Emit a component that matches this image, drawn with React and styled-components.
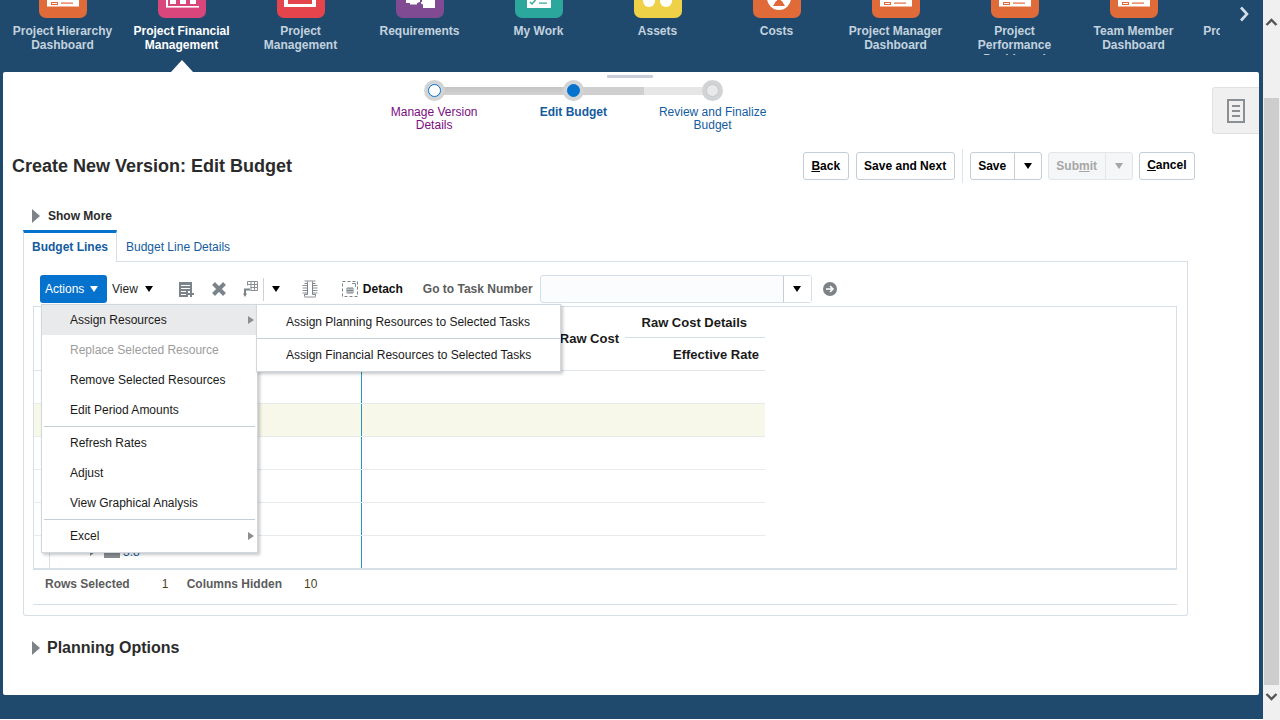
import React from "react";
import styled, { createGlobalStyle } from "styled-components";

const GlobalStyle = createGlobalStyle`
  html, body {
    margin: 0;
    padding: 0;
    height: 720px;
    overflow: hidden;
    background: #fff;
    font-family: "Liberation Sans", Arial, sans-serif;
    font-size: 12px;
  }
`;

const navItems = [
  { label: "Project Hierarchy Dashboard", color: "#e06b39", icon: "card" },
  { label: "Project Financial Management", color: "#d9467c", icon: "bars", active: true },
  { label: "Project Management", color: "#e5444d", icon: "screen" },
  { label: "Requirements", color: "#814b94", icon: "puzzle" },
  { label: "My Work", color: "#2ba79b", icon: "check" },
  { label: "Assets", color: "#eed146", icon: "dots" },
  { label: "Costs", color: "#e06b39", icon: "coin" },
  { label: "Project Manager Dashboard", color: "#e06b39", icon: "card" },
  { label: "Project Performance Dashboard", color: "#e06b39", icon: "card" },
  { label: "Team Member Dashboard", color: "#e06b39", icon: "card" },
  { label: "Project Resource Dashboard", color: "#e06b39", icon: "card" },
];

function TileIcon({ kind, color }) {
  return (
    <svg width="48" height="18" viewBox="0 0 48 18">
      {kind === "card" && (
        <>
          <rect x="8" y="0" width="32" height="6.5" fill="#fff" />
          <rect x="12.5" y="2.5" width="6" height="2" fill="none" stroke={color} />
          <rect x="22" y="2.5" width="12" height="1.2" fill={color} />
        </>
      )}
      {kind === "bars" && (
        <>
          <rect x="8" y="6" width="33" height="1.6" fill="#fff" />
          <rect x="8" y="0" width="2" height="7" fill="#fff" />
          <rect x="12" y="0" width="6" height="4" fill="#fff" />
          <rect x="22" y="0" width="6" height="4" fill="#fff" />
          <rect x="32" y="0" width="6" height="4" fill="#fff" />
        </>
      )}
      {kind === "screen" && (
        <path d="M7 0h32v7H7z M11 0v4h24V0z" fill="#fff" fillRule="evenodd" />
      )}
      {kind === "puzzle" && (
        <path d="M10 0h14v2l-3 1v1.5H14V3h-4z M26 0h13v8H27V4.5l-2-1V2h1z" fill="#fff" />
      )}
      {kind === "check" && (
        <>
          <rect x="12" y="0" width="24" height="8" fill="#fff" />
          <path d="M15 2l2 2 3.5-4" fill="none" stroke={color} strokeWidth="1.4" />
          <rect x="24" y="2.5" width="8" height="1.2" fill={color} />
        </>
      )}
      {kind === "dots" && (
        <>
          <circle cx="15" cy="1" r="6" fill="#fff" />
          <circle cx="32" cy="1" r="6" fill="#fff" />
        </>
      )}
      {kind === "coin" && (
        <>
          <circle cx="26" cy="-2" r="12" fill="#fff" />
          <path d="M20 6l3-5h1V0h4v1h1l3 5z" fill={color} />
        </>
      )}
    </svg>
  );
}

const Page = styled.div`
  display: flex;
  width: 1280px;
  height: 720px;
`;

const Main = styled.div`
  display: flex;
  flex-direction: column;
  width: 1263px;
  height: 719px;
  background: #1f4a6e;
`;

const Nav = styled.nav`
  display: flex;
  height: 72px;
  flex: none;
`;

const NavStrip = styled.div`
  display: flex;
  width: 1220px;
  padding-left: 3px;
  box-sizing: border-box;
  overflow: hidden;
`;

const NavItem = styled.div`
  position: relative;
  flex: none;
  display: flex;
  flex-direction: column;
  align-items: center;
  width: 119px;
  height: 72px;

  ${(p) =>
    p.$active &&
    `
    &::after {
      content: "";
      position: absolute;
      left: 49px;
      bottom: 0;
      border-left: 11px solid transparent;
      border-right: 11px solid transparent;
      border-bottom: 12px solid #fff;
    }
  `}
`;

const Tile = styled.div`
  width: 48px;
  height: 18px;
  flex: none;
  margin-left: 1px;
  border-radius: 0 0 7px 7px;
  background: ${(p) => p.$color};
  line-height: 0;
`;

const NavLabel = styled.div`
  width: 106px;
  height: 31px;
  margin-top: 6px;
  overflow: hidden;
  text-align: center;
  font-weight: bold;
  font-size: 12px;
  line-height: 14px;
  color: ${(p) => (p.$active ? "#fff" : "#c3d2de")};
`;

const NavNext = styled.div`
  display: flex;
  justify-content: center;
  width: 43px;
  box-sizing: border-box;
  padding: 6px 0 0 5px;
  height: 26px;
`;

const Card = styled.main`
  position: relative;
  width: 1256px;
  height: 623px;
  flex: none;
  margin-left: 3px;
  background: #fff;
  border-radius: 2px;
  display: flex;
  flex-direction: column;
`;

const SplitHandle = styled.div`
  position: absolute;
  left: 604px;
  top: 3px;
  width: 46px;
  height: 3px;
  border-radius: 1px;
  background: #c9ced9;
`;

const DrawerTab = styled.div`
  position: absolute;
  right: 0;
  top: 15px;
  width: 46px;
  height: 45px;
  display: flex;
  align-items: center;
  justify-content: center;
  background: #f0f0f0;
  border: 1px solid #dfe2e5;
  border-right: 0;
  border-radius: 3px 0 0 3px;
`;

const Train = styled.div`
  display: flex;
  margin: 8px 0 0 361.5px;
  height: 72px;
  flex: none;
`;

const Step = styled.div`
  position: relative;
  width: 139.25px;
  display: flex;
  flex-direction: column;
  align-items: center;

  ${(p) =>
    p.$track &&
    `
    &::before {
      content: "";
      position: absolute;
      left: 70px;
      top: 7px;
      width: 140px;
      height: 8px;
      background: ${p.$track};
    }
  `}
`;

const StepDot = styled.div`
  position: relative;
  z-index: 1;
  width: 21px;
  height: 21px;
  box-sizing: border-box;
  border-radius: 50%;
  background: #d1d3d4;
  display: flex;
  align-items: center;
  justify-content: center;

  &::after {
    content: "";
    width: 13px;
    height: 13px;
    box-sizing: border-box;
    border-radius: 50%;
    background: ${(p) => (p.$state === "current" ? "#0572ce" : p.$state === "done" ? "#fff" : "#e8e9ea")};
    border: 1px solid ${(p) => (p.$state === "todo" ? "#c3c9cd" : "#0572ce")};
  }
`;

const StepLabel = styled.div`
  width: 112px;
  margin-top: 5px;
  text-align: center;
  font-size: 12px;
  line-height: 13px;
  font-weight: ${(p) => (p.$state === "current" ? "bold" : "normal")};
  color: ${(p) => (p.$state === "done" ? "#7a0d80" : "#145c9e")};
`;

const HeaderRow = styled.div`
  display: flex;
  align-items: center;
  height: 28px;
  flex: none;
  margin-top: 0;
  padding: 0 64px 0 9px;
`;

const Title = styled.h1`
  margin: 0;
  flex: 1;
  font-size: 18px;
  line-height: 28px;
  font-weight: bold;
  color: #2b2b2b;
`;

const Button = styled.button`
  height: 28px;
  box-sizing: border-box;
  padding: 0 ${(p) => p.$pad || 9}px ${(p) => p.$raise || 0}px;
  margin-left: ${(p) => p.$ml || 0}px;
  background: #fff;
  border: 1px solid #c4ced7;
  border-radius: 3px;
  font-family: inherit;
  font-size: 12px;
  font-weight: bold;
  color: #000;
`;

const ButtonSep = styled.div`
  width: 1px;
  height: 34px;
  margin: 0 7px 0 7px;
  background: #dfe4e8;
`;

const SplitButton = styled.div`
  display: flex;
  height: 28px;
  box-sizing: border-box;
  margin-left: ${(p) => p.$ml || 0}px;
  background: ${(p) => (p.$disabled ? "#f5f6f7" : "#fff")};
  border: 1px solid ${(p) => (p.$disabled ? "#e3e6e9" : "#c4ced7")};
  border-radius: 3px;
  font-size: 12px;
  font-weight: bold;
  color: ${(p) => (p.$disabled ? "#a6a6a6" : "#000")};
`;

const SplitLabel = styled.span`
  display: flex;
  align-items: center;
  justify-content: center;
  width: ${(p) => p.$w}px;
`;

const SplitArrow = styled.span`
  display: flex;
  align-items: center;
  justify-content: center;
  width: ${(p) => p.$w}px;
  border-left: 1px solid ${(p) => (p.$disabled ? "#e3e6e9" : "#c4ced7")};
`;

const Caret = styled.span`
  display: inline-block;
  flex: none;
  margin-left: ${(p) => p.$ml || 0}px;
  border-left: 4.5px solid transparent;
  border-right: 4.5px solid transparent;
  border-top: 6px solid ${(p) => p.$color || "#000"};
`;

const Disclosure = styled.div`
  display: flex;
  align-items: center;
  flex: none;
  padding-left: 29px;
  height: 18px;
  margin-top: ${(p) => p.$mt}px;
  font-weight: bold;
  font-size: ${(p) => p.$size}px;
  color: #2b2b2b;
`;

const DisclosureArrow = styled.span`
  flex: none;
  width: 0;
  height: 0;
  margin-right: ${(p) => p.$mr}px;
  border-top: 7.5px solid transparent;
  border-bottom: 7.5px solid transparent;
  border-left: 8px solid #7d8287;
`;

const Tabs = styled.div`
  display: flex;
  flex: none;
  height: 32px;
  margin: 5px 71px 0 20px;
`;

const ActiveTab = styled.div`
  width: 94px;
  box-sizing: border-box;
  border-top: 3px solid #0572ce;
  border-left: 1px solid #d6dfe6;
  border-right: 1px solid #d6dfe6;
  padding: 7px 0 0 8px;
  font-weight: bold;
  line-height: 14px;
  color: #145c9e;
`;

const Tab = styled.div`
  flex: 1;
  border-bottom: 1px solid #d6dfe6;
  padding: 10px 0 0 9px;
  line-height: 14px;
  color: #145c9e;
`;

const Panel = styled.section`
  position: relative;
  flex: none;
  width: 1165px;
  height: 354px;
  box-sizing: border-box;
  margin-left: 20px;
  border: 1px solid #d6dfe6;
  border-top: 0;
  border-radius: 0 0 3px 3px;
  padding: 13px 10px 0 9px;
`;

const Toolbar = styled.div`
  display: flex;
  align-items: center;
  height: 28px;
  padding-left: 7px;
`;

const ActionsButton = styled.div`
  display: flex;
  align-items: center;
  width: 67px;
  height: 28px;
  box-sizing: border-box;
  padding-left: 5px;
  background: #0572ce;
  border-radius: 3px;
  color: #fff;
`;

const ViewMenu = styled.div`
  display: flex;
  align-items: center;
  margin-left: 5px;
  color: #222;
`;

const ToolIcon = styled.span`
  display: flex;
  flex: none;
  margin-left: ${(p) => p.$ml}px;
`;

const ToolSep = styled.span`
  width: 1px;
  height: 23px;
  margin: 0 8px 0 4px;
  background: #ccd2d7;
`;

const DetachLabel = styled.span`
  margin-left: 5px;
  font-weight: bold;
  color: #111;
`;

const FieldLabel = styled.span`
  margin-left: 20px;
  font-weight: bold;
  color: #5c5c5c;
`;

const FieldBox = styled.div`
  display: flex;
  width: 272px;
  height: 28px;
  box-sizing: border-box;
  margin-left: 7px;
  background: #fbfcfd;
  border: 1px solid #d6dfe6;
  border-radius: 3px;
`;

const FieldInput = styled.div`
  flex: 1;
`;

const FieldArrow = styled.div`
  width: 27px;
  display: flex;
  align-items: center;
  justify-content: center;
  background: #fff;
  border-left: 1px solid #c4ced7;
`;

const GoIcon = styled.span`
  display: flex;
  margin-left: 11px;
`;

const TableBox = styled.div`
  width: 1144px;
  height: 264px;
  box-sizing: border-box;
  margin-top: 3px;
  border: 1px solid #d6dfe6;
  border-bottom-width: 2px;
`;

const TableHead = styled.div`
  display: grid;
  grid-template-columns: 16px 312px 263px 140px;
  width: 731px;
  height: 63px;
  border-bottom: 1px solid #dfe5ea;
`;

const HeadCell = styled.div`
  border-right: ${(p) => (p.$rule ? "1px solid #dfe5ea" : "0")};
`;

const RawCostCell = styled.div`
  display: flex;
  align-items: center;
  justify-content: flex-end;
  padding-right: 6px;
  padding-top: 0;
  font-size: 13px;
  font-weight: bold;
  color: #1a1a1a;
`;

const DetailsCell = styled.div`
  display: grid;
  grid-template-rows: 31px 32px;
  font-size: 13px;
  font-weight: bold;
  color: #1a1a1a;
`;

const DetailsTop = styled.div`
  display: flex;
  align-items: center;
  justify-content: flex-end;
  padding-right: 18px;
  border-bottom: 1px solid #d6dfe6;
`;

const DetailsBottom = styled.div`
  display: flex;
  align-items: center;
  justify-content: flex-end;
  padding-right: 6px;
`;

const Row = styled.div`
  display: grid;
  grid-template-columns: 16px 312px 403px;
  width: 731px;
  height: ${(p) => p.$h}px;
  box-sizing: border-box;
  border-bottom: ${(p) => (p.$last ? "0" : "1px solid #e7ebee")};
  background: ${(p) => (p.$hl ? "#f7f8e9" : "transparent")};
`;

const IndexCell = styled.div`
  border-right: 1px solid #d6dfe6;
`;

const TaskCell = styled.div`
  display: flex;
  align-items: center;
  padding-left: 40px;
  border-right: 1px solid #2298bd;
  color: #145c9e;
`;

const TaskArrow = styled.span`
  border-top: 4px solid transparent;
  border-bottom: 4px solid transparent;
  border-left: 5px solid #7d8287;
  margin-right: 9px;
`;

const TaskSwatch = styled.span`
  width: 16px;
  height: 12px;
  margin-right: 3px;
  background: #8a8f94;
`;

const StatusBar = styled.div`
  display: flex;
  align-items: center;
  height: 35px;
  box-sizing: border-box;
  border-bottom: 1px solid #d6dfe6;
  width: 1144px;
  padding: 0 0 7px 12px;
  font-weight: bold;
  color: #5c5c5c;
`;

const StatusValue = styled.span`
  width: ${(p) => p.$w}px;
  padding-left: ${(p) => p.$pl}px;
  box-sizing: border-box;
  font-weight: normal;
  color: #4d3f1c;
`;

const Menu = styled.div`
  position: absolute;
  left: 17px;
  top: 42px;
  z-index: 3;
  width: 217px;
  box-sizing: border-box;
  padding-bottom: 1px;
  background: #fff;
  border: 1px solid #d0d7dd;
  box-shadow: 2px 2px 3px rgba(0, 0, 0, 0.22);
`;

const SubMenu = styled(Menu)`
  left: 232px;
  width: 305px;
  padding-bottom: 0;
  z-index: 4;
`;

const MenuItem = styled.div`
  position: relative;
  display: flex;
  align-items: center;
  height: ${(p) => p.$h || 30}px;
  padding-left: ${(p) => p.$pl || 28}px;
  background: ${(p) => (p.$hover ? "#e9eaeb" : "transparent")};
  color: ${(p) => (p.$disabled ? "#9c9c9c" : "#1a1a1a")};
`;

const MenuArrow = styled.span`
  position: absolute;
  right: 3px;
  top: 50%;
  margin-top: -4px;
  border-top: 4px solid transparent;
  border-bottom: 4px solid transparent;
  border-left: 6px solid #8a8f94;
`;

const MenuDivider = styled.div`
  height: 1px;
  margin: 1px 2px 1px;
  background: #c4ced7;
`;

const SubDivider = styled.div`
  height: 1px;
  background: #c4ced7;
`;

const Footer = styled.div`
  flex: 1;
`;

const Scrollbar = styled.div`
  position: relative;
  width: 17px;
  height: 720px;
  background: #f0f0f0;
  display: flex;
  flex-direction: column;
  align-items: center;
`;

const ScrollArrow = styled.div`
  height: ${(p) => p.$h}px;
  display: flex;
  align-items: ${(p) => p.$align};
  padding: ${(p) => p.$pad};
  box-sizing: border-box;
`;

const ScrollThumb = styled.div`
  width: 15px;
  height: 587px;
  flex: none;
  background: #cdcdcd;
`;

const rowHeights = [33, 33, 33, 33, 33, 32];

export default function App() {
  return (
    <>
      <GlobalStyle />
      <Page>
        <Main>
          <Nav>
            <NavStrip>
              {navItems.map((item) => (
                <NavItem key={item.label} $active={item.active}>
                  <Tile $color={item.color}>
                    <TileIcon kind={item.icon} color={item.color} />
                  </Tile>
                  <NavLabel $active={item.active}>{item.label}</NavLabel>
                </NavItem>
              ))}
            </NavStrip>
            <NavNext>
              <svg width="12" height="16" viewBox="0 0 12 16">
                <path d="M3 1.5L9 8l-6 6.5" fill="none" stroke="#d5dfe6" strokeWidth="2.6" />
              </svg>
            </NavNext>
          </Nav>

          <Card>
            <SplitHandle />
            <DrawerTab>
              <svg width="18" height="24" viewBox="0 0 18 24">
                <rect x="1" y="1" width="16" height="22" fill="none" stroke="#8a8f94" strokeWidth="2" />
                <path d="M5 7h8M5 12h8M5 17h8" stroke="#8a8f94" strokeWidth="2" />
              </svg>
            </DrawerTab>

            <Train>
              <Step $track="linear-gradient(#c4c4c4,#d2d2d2)">
                <StepDot $state="done" />
                <StepLabel $state="done">Manage Version Details</StepLabel>
              </Step>
              <Step $track="linear-gradient(90deg,#cfcfcf 50%,#e6e6e6 50%)">
                <StepDot $state="current" />
                <StepLabel $state="current">Edit Budget</StepLabel>
              </Step>
              <Step>
                <StepDot $state="todo" />
                <StepLabel $state="todo">Review and Finalize Budget</StepLabel>
              </Step>
            </Train>

            <HeaderRow>
              <Title>Create New Version: Edit Budget</Title>
              <Button $pad={7.5}>
                <u>B</u>ack
              </Button>
              <Button $ml={7} $pad={7.5}>Save and Next</Button>
              <ButtonSep />
              <SplitButton>
                <SplitLabel $w={43}>Save</SplitLabel>
                <SplitArrow $w={26}>
                  <Caret />
                </SplitArrow>
              </SplitButton>
              <SplitButton $ml={6} $disabled>
                <SplitLabel $w={56}>
                  <span>
                    Sub<u>m</u>it
                  </span>
                </SplitLabel>
                <SplitArrow $w={26} $disabled>
                  <Caret $color="#a6a6a6" />
                </SplitArrow>
              </SplitButton>
              <Button $ml={6} $pad={7.5} $raise={2}>
                <u>C</u>ancel
              </Button>
            </HeaderRow>

            <Disclosure $mt={27} $size={12}>
              <DisclosureArrow $mr={8} />
              Show More
            </Disclosure>

            <Tabs>
              <ActiveTab>Budget Lines</ActiveTab>
              <Tab>Budget Line Details</Tab>
            </Tabs>

            <Panel>
              <Toolbar>
                <ActionsButton>
                  Actions
                  <Caret $color="#fff" $ml={6} />
                </ActionsButton>
                <ViewMenu>
                  View
                  <Caret $ml={7} />
                </ViewMenu>
                <ToolIcon $ml={25}>
                  <svg width="17" height="17" viewBox="0 0 17 17">
                    <path d="M1 1h13v9h-4v6H1z" fill="#7b848a" />
                    <path d="M3 4.5h9M3 7.5h9M3 10.5h5M3 13.5h5" stroke="#fff" />
                    <path d="M13 10v6M10 13h6" stroke="#7b848a" strokeWidth="2" />
                  </svg>
                </ToolIcon>
                <ToolIcon $ml={16}>
                  <svg width="16" height="16" viewBox="0 0 16 16">
                    <path d="M2.5 2.5l11 11M13.5 2.5l-11 11" stroke="#7b848a" strokeWidth="4" />
                  </svg>
                </ToolIcon>
                <ToolIcon $ml={15}>
                  <svg width="17" height="18" viewBox="0 0 17 18">
                    <path d="M5.5 1.5h10v9h-7M5.5 1.5v4M5.5 4.5h10M9 1.5v9M12.5 1.5v9M8.5 7.5h7" fill="none" stroke="#8a8f94" />
                    <path d="M8 9.5H3v6" fill="none" stroke="#7b848a" strokeWidth="2" />
                    <path d="M1 13.5h4L3 17z" fill="#7b848a" />
                  </svg>
                </ToolIcon>
                <ToolSep />
                <Caret />
                <ToolIcon $ml={22}>
                  <svg width="16" height="18" viewBox="0 0 16 18">
                    <path d="M2.5 1h11M2.5 17h11M.5 5.5h5M.5 8h5M.5 10.5h5M.5 13h5M10.5 5.5h5M10.5 8h5M10.5 10.5h5M10.5 13h5" fill="none" stroke="#8a8f94" />
                    <path d="M5.5 1.5v2h-3M10.5 1.5v2h3M5.5 3.5v11M10.5 3.5v11M5.5 14.5h-3v2M10.5 14.5h3v2" fill="none" stroke="#7b848a" />
                  </svg>
                </ToolIcon>
                <ToolIcon $ml={24}>
                  <svg width="16" height="16" viewBox="0 0 16 16">
                    <rect x=".5" y=".5" width="15" height="15" fill="none" stroke="#7b848a" strokeDasharray="3 2" />
                    <path d="M5 7h6v5H5zM5 9.5h6M7 7v5M9 7v5" fill="none" stroke="#7b848a" />
                    <path d="M10 2.5h3.5V6" fill="none" stroke="#8a8f94" />
                  </svg>
                </ToolIcon>
                <DetachLabel>Detach</DetachLabel>
                <FieldLabel>Go to Task Number</FieldLabel>
                <FieldBox>
                  <FieldInput />
                  <FieldArrow>
                    <Caret />
                  </FieldArrow>
                </FieldBox>
                <GoIcon>
                  <svg width="14" height="14" viewBox="0 0 14 14">
                    <circle cx="7" cy="7" r="7" fill="#7d8287" />
                    <path d="M3 7h7M7 4l3 3-3 3" fill="none" stroke="#fff" strokeWidth="1.6" />
                  </svg>
                </GoIcon>
              </Toolbar>

              <TableBox>
                <TableHead>
                  <HeadCell $rule />
                  <HeadCell />
                  <RawCostCell>Raw Cost</RawCostCell>
                  <DetailsCell>
                    <DetailsTop>Raw Cost Details</DetailsTop>
                    <DetailsBottom>Effective Rate</DetailsBottom>
                  </DetailsCell>
                </TableHead>
                {rowHeights.map((h, i) => (
                  <Row key={i} $h={h} $hl={i === 1} $last={i === 5}>
                    <IndexCell />
                    <TaskCell>
                      {i === 5 && (
                        <>
                          <TaskArrow />
                          <TaskSwatch />
                          3.8
                        </>
                      )}
                    </TaskCell>
                    <div />
                  </Row>
                ))}
              </TableBox>

              <StatusBar>
                Rows Selected
                <StatusValue $w={57} $pl={32}>1</StatusValue>
                Columns Hidden
                <StatusValue $w={34} $pl={22}>10</StatusValue>
              </StatusBar>

              <Menu>
                <MenuItem $hover>
                  Assign Resources
                  <MenuArrow />
                </MenuItem>
                <MenuItem $disabled>Replace Selected Resource</MenuItem>
                <MenuItem>Remove Selected Resources</MenuItem>
                <MenuItem>Edit Period Amounts</MenuItem>
                <MenuDivider />
                <MenuItem>Refresh Rates</MenuItem>
                <MenuItem>Adjust</MenuItem>
                <MenuItem>View Graphical Analysis</MenuItem>
                <MenuDivider />
                <MenuItem>
                  Excel
                  <MenuArrow />
                </MenuItem>
              </Menu>

              <SubMenu>
                <MenuItem $h={33} $pl={29}>Assign Planning Resources to Selected Tasks</MenuItem>
                <SubDivider />
                <MenuItem $h={32} $pl={29}>Assign Financial Resources to Selected Tasks</MenuItem>
              </SubMenu>
            </Panel>

            <Disclosure $mt={23} $size={16}>
              <DisclosureArrow $mr={7} />
              Planning Options
            </Disclosure>
          </Card>
          <Footer />
        </Main>

        <Scrollbar>
          <ScrollArrow $h={98} $align="flex-start" $pad="18px 0 0">
            <svg width="13" height="8" viewBox="0 0 13 8">
              <path d="M1.5 7l5-5 5 5" fill="none" stroke="#555" strokeWidth="2.4" />
            </svg>
          </ScrollArrow>
          <ScrollThumb />
          <ScrollArrow $h={35} $align="flex-start" $pad="8px 0 0">
            <svg width="13" height="8" viewBox="0 0 13 8">
              <path d="M1.5 1l5 5 5-5" fill="none" stroke="#555" strokeWidth="2.4" />
            </svg>
          </ScrollArrow>
        </Scrollbar>
      </Page>
    </>
  );
}
